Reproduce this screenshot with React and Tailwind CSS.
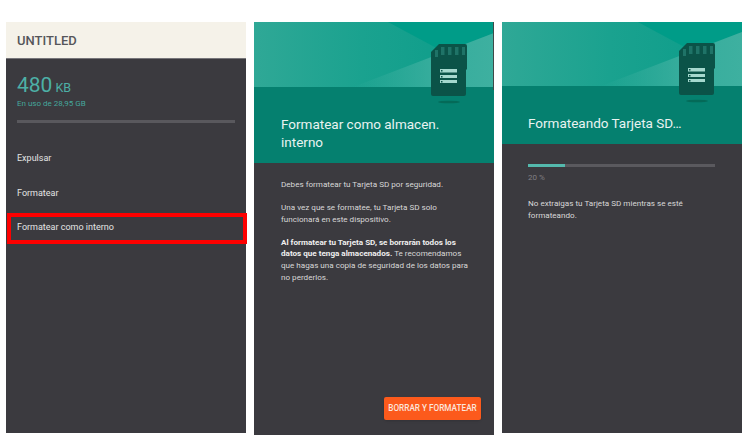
const SdArt = ({ offset }) => (
  <svg className={`absolute left-0 ${offset}`} width="240" height="101" viewBox="0 0 240 101">
    <defs>
      <linearGradient id="sky" x1="0" x2="1" y1="0" y2="0">
        <stop offset="0" stopColor="#2fa896" />
        <stop offset="0.45" stopColor="#1aa28f" />
        <stop offset="1" stopColor="#0a9c89" />
      </linearGradient>
      <linearGradient id="glow" x1="0" x2="1" y1="0" y2="0">
        <stop offset="0" stopColor="#3eb0a0" stopOpacity="0" />
        <stop offset="0.55" stopColor="#3eb0a0" stopOpacity="0.8" />
        <stop offset="1" stopColor="#3eb0a0" />
      </linearGradient>
    </defs>
    <rect width="240" height="65" fill="url(#sky)" />
    <path d="M134 0H240V11L190 30Z" fill="#009c88" />
    <path d="M240 11V65H99Z" fill="url(#glow)" />
    <rect y="65" width="240" height="36" fill="#05806f" />
    <ellipse cx="195" cy="80" rx="11" ry="1.3" fill="#04614f" opacity="0.7" />
    <path d="M185 22H211Q213 22 213 24V47L212 48V72Q212 74 210 74H179Q177 74 177 72V30Z" fill="#0b5348" />
    <g fill="#1f7367">
      <rect x="181" y="28" width="3" height="7" />
      <rect x="187" y="25" width="3.5" height="8" />
      <rect x="194" y="25" width="3.5" height="8" />
      <rect x="201" y="25" width="3.5" height="8" />
      <rect x="208" y="25" width="3" height="8" />
    </g>
    <g fill="#a5d8ce">
      <rect x="186" y="47" width="17" height="3.5" />
      <rect x="186" y="53" width="17" height="3" />
      <rect x="186" y="58" width="17" height="3" />
    </g>
    <g fill="#0b5348">
      <rect x="187" y="48" width="1.5" height="1.5" />
      <rect x="187" y="54" width="1.5" height="1.5" />
      <rect x="187" y="59" width="1.5" height="1.5" />
    </g>
  </svg>
);

const Hero = ({ height, offset, pad, children }) => (
  <div className={`relative overflow-hidden w-full shrink-0 bg-[#05806f] ${height}`}>
    <SdArt offset={offset} />
    <div className={`absolute bottom-0 left-0 w-full ${pad}`}>{children}</div>
  </div>
);

export default function App() {
  return (
    <div className="w-[750px] h-[440px] bg-white overflow-hidden flex gap-2 pl-[6px] pt-[22px] font-['Roboto',sans-serif]">
      <div className="relative w-[240px] h-[411px] bg-[#3b3a3f]">
        <div className="h-[37px] bg-[#f5f2e9] border-b border-[#77767a] pl-[11px] pt-[2px] flex items-center">
          <span className="text-[#56565a] text-[13px] font-medium">UNTITLED</span>
        </div>
        <div className="px-[11px] pt-[14px]">
          <div className="flex items-baseline h-[24px] text-[#4db0a6] text-[21px] leading-[24px]">
            <span>480</span>
            <span className="text-[12.5px] ml-[3px]">KB</span>
          </div>
          <div className="text-[#45a79c] text-[8px] leading-[12px] mt-[1px]">En uso de 28,95 GB</div>
          <div className="h-[3px] bg-[#59585d] mt-[10px] w-[218px]" />
        </div>
        <div className="text-[#e4e4e4] text-[9px] pl-[11px] mt-[30px] flex flex-col gap-[23.5px] leading-[11px]">
          <div>Expulsar</div>
          <div>Formatear</div>
          <div>Formatear como interno</div>
        </div>
        <div className="absolute top-[191px] left-[1px] w-[240px] h-[31px] border-[4px] border-[#fd0000]" />
      </div>

      <div className="relative w-[240px] h-[413px] bg-[#3b3a3f]">
        <Hero height="h-[141px]" offset="top-0" pad="pl-[27px]">
          <div className="text-[#e9f3f1] text-[13.5px] leading-[18px] pb-[12px]">
            Formatear como almacen.
            <br />
            interno
          </div>
        </Hero>
        <div className="absolute top-0 right-0 w-px h-[68px] bg-[#3f4a48]" />
        <div className="pl-[27px] pr-[24px] pt-[16px] text-[#d8d8d8] text-[8.1px] leading-[11.6px]">
          <p>Debes formatear tu Tarjeta SD por seguridad.</p>
          <p className="mt-[11.5px]">Una vez que se formatee, tu Tarjeta SD solo funcionará en este dispositivo.</p>
          <p className="mt-[11.5px]">
            <span className="font-bold text-[#f0f0f0]">Al formatear tu Tarjeta SD, se borrarán todos los datos que tenga almacenados.</span>{" "}
            Te recomendamos que hagas una copia de seguridad de los datos para no perderlos.
          </p>
        </div>
        <button className="absolute right-[13px] bottom-[15px] w-[97px] h-[23px] rounded-[2px] bg-[#fc5a1c] text-[#fbe6dc] text-[8.2px] font-medium shadow-sm">
          BORRAR Y FORMATEAR
        </button>
      </div>

      <div className="relative w-[240px] h-[411px] bg-[#3b3a3f]">
        <Hero height="h-[122px]" offset="-top-px" pad="pl-[26px]">
          <div className="text-[#e9f3f1] text-[13.5px] leading-[18px] pb-[12px]">Formateando Tarjeta SD…</div>
        </Hero>
        <div className="pl-[26px] pr-[27px] pt-[20px]">
          <div className="h-[3px] bg-[#5a595e]">
            <div className="h-full w-[20%] bg-[#54b9ad]" />
          </div>
          <div className="text-[#807f84] text-[8px] leading-[11px] mt-[5px]">20 %</div>
          <p className="text-[#d8d8d8] text-[8.1px] leading-[11.7px] mt-[15px]">
            No extraigas tu Tarjeta SD mientras se esté formateando.
          </p>
        </div>
      </div>
    </div>
  );
}
